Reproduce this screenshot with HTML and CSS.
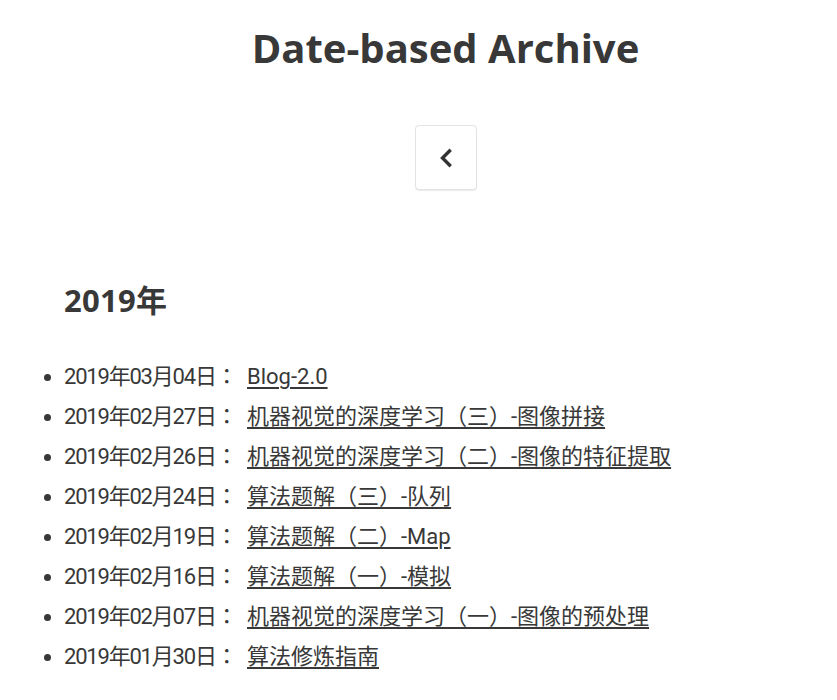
FILE: index.html
```html
<!DOCTYPE html>
<html>
<head>
<meta charset="utf-8">
<title>Date-based Archive</title>
<link rel="stylesheet" href="styles.css">
</head>
<body>
<main class="page">
  <h1 class="title">Date-based Archive</h1>
  <nav class="pager">
    <a class="pager-btn" href="#" aria-label="Previous">
      <svg width="14" height="20" viewBox="0 0 14 20"><path d="M10.5 3 L3.5 10 L10.5 17" fill="none" stroke="#333" stroke-width="3.4" stroke-linecap="square" stroke-linejoin="miter"/></svg>
    </a>
  </nav>
  <section class="year">
    <h2 class="year-title">2019年</h2>
    <ul class="posts">
      <li><time class="date">2019年03月04日：</time> <a href="#">Blog-2.0</a></li>
      <li><time class="date">2019年02月27日：</time> <a href="#">机器视觉的深度学习（三）-图像拼接</a></li>
      <li><time class="date">2019年02月26日：</time> <a href="#">机器视觉的深度学习（二）-图像的特征提取</a></li>
      <li><time class="date">2019年02月24日：</time> <a href="#">算法题解（三）-队列</a></li>
      <li><time class="date">2019年02月19日：</time> <a href="#">算法题解（二）-Map</a></li>
      <li><time class="date">2019年02月16日：</time> <a href="#">算法题解（一）-模拟</a></li>
      <li><time class="date">2019年02月07日：</time> <a href="#">机器视觉的深度学习（一）-图像的预处理</a></li>
      <li><time class="date">2019年01月30日：</time> <a href="#">算法修炼指南</a></li>
    </ul>
  </section>
</main>
</body>
</html>
```

FILE: styles.css
```css
html, body {
  margin: 0;
  padding: 0;
  background: #fff;
}
body {
  font-family: "Open Sans", "Noto Sans CJK TC", sans-serif;
  color: #383838;
}
.page {
  padding: 0 0 0 54px;
}
.title {
  margin: 0;
  padding-top: 20px;
  text-align: center;
  font-size: 40px;
  line-height: 56px;
  font-weight: 700;
  color: #383838;
}
.pager {
  display: flex;
  justify-content: center;
  margin-top: 49px;
}
.pager-btn {
  display: flex;
  align-items: center;
  justify-content: center;
  width: 60px;
  height: 63px;
  border: 1px solid #e3e3e3;
  border-radius: 4px;
  box-shadow: 0 1px 1px rgba(0,0,0,0.08);
  background: #fff;
}
.year {
  padding-left: 10px;
  margin-top: 89px;
}
.year-title {
  margin: 0;
  font-size: 31px;
  line-height: 42px;
  font-weight: 700;
  letter-spacing: 0.3px;
}
.posts {
  margin: 36px 0 0 0;
  padding: 0;
  list-style: disc outside;
  font-family: Roboto, "Noto Sans CJK TC", sans-serif;
}
.posts li {
  font-size: 22px;
  line-height: 40px;
  letter-spacing: 0;
}
.date {
  letter-spacing: -1.2px;
}
.posts a {
  margin-left: 5px;
  color: #383838;
  text-decoration: underline;
  text-decoration-thickness: 2px;
  text-underline-offset: 3px;
}
```
